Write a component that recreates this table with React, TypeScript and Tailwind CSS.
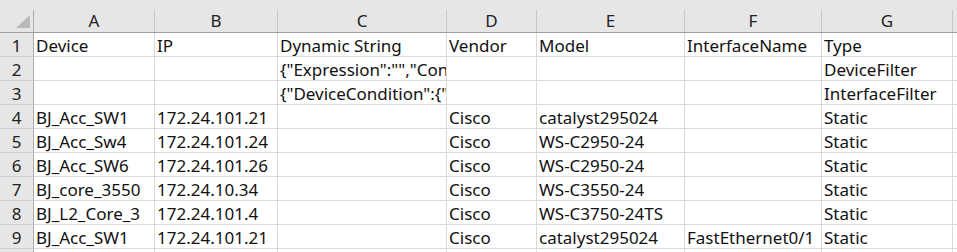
import React from "react";

const cols = ["A", "B", "C", "D", "E", "F", "G"];

const rows: string[][] = [
  ["Device", "IP", "Dynamic String", "Vendor", "Model", "InterfaceName", "Type"],
  ["", "", '{"Expression":"","Condition":[]}', "", "", "", "DeviceFilter"],
  ["", "", '{"DeviceCondition":{"Expression":""}}', "", "", "", "InterfaceFilter"],
  ["BJ_Acc_SW1", "172.24.101.21", "", "Cisco", "catalyst295024", "", "Static"],
  ["BJ_Acc_Sw4", "172.24.101.24", "", "Cisco", "WS-C2950-24", "", "Static"],
  ["BJ_Acc_SW6", "172.24.101.26", "", "Cisco", "WS-C2950-24", "", "Static"],
  ["BJ_core_3550", "172.24.10.34", "", "Cisco", "WS-C3550-24", "", "Static"],
  ["BJ_L2_Core_3", "172.24.101.4", "", "Cisco", "WS-C3750-24TS", "", "Static"],
  ["BJ_Acc_SW1", "172.24.101.21", "", "Cisco", "catalyst295024", "FastEthernet0/1", "Static"],
  ["", "", "", "", "", "", ""],
];

const grid =
  "grid grid-cols-[34px_121px_123px_169px_90px_148px_137px_131px_1fr]";

export default function App() {
  return (
    <div
      className="w-[957px] h-[252px] overflow-hidden bg-white text-[#111]"
      style={{ fontFamily: '"Noto Sans", "Liberation Sans", sans-serif' }}
    >
      <div className="h-[10px] bg-[#e6e6e6]" />
      <div className={`${grid} h-[23px] bg-[#e6e6e6] border-b border-[#9e9e9e]`}>
        <div className="relative border-r border-[#ababab]">
          <svg className="absolute left-[16px] top-[5px]" width="14" height="13" viewBox="0 0 14 13">
            <polygon points="14,0 14,13 0,13" fill="#b9b9b9" />
          </svg>
        </div>
        {cols.map((c) => (
          <div
            key={c}
            className="border-r border-[#c8c8c8] text-center text-[17px] leading-[22px] text-[#222]"
          >
            {c}
          </div>
        ))}
        <div />
      </div>
      {rows.map((r, i) => (
        <div key={i} className={`${grid} h-[24px]`}>
          <div className="bg-[#e6e6e6] border-r border-[#ababab] border-b border-b-[#d0d0d0] text-center text-[17px] leading-[20px] pt-[3px] text-[#222]">
            {i < 9 ? i + 1 : ""}
          </div>
          {r.map((v, j) => (
            <div
              key={j}
              className="border-r border-b border-[#d9d9d9] overflow-hidden whitespace-nowrap pl-[2px] text-[17px] leading-[20px] pt-[3px]"
            >
              {v}
            </div>
          ))}
          <div className="border-b border-[#d9d9d9]" />
        </div>
      ))}
    </div>
  );
}
